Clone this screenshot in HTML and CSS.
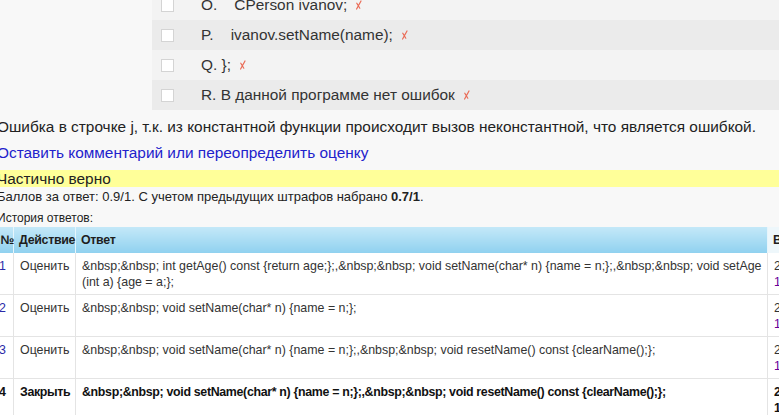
FILE: index.html
```html
<!DOCTYPE html>
<html lang="ru">
<head>
  <meta charset="UTF-8" />
  <title>Просмотр попытки</title>
  <link rel="stylesheet" href="styles.css">
</head>
<body>
  <div class="page">

    <!-- Answer options -->
    <div class="answers">
      <div class="option odd">
        <span class="box"></span>
        <span class="label">O.&nbsp;&nbsp;&nbsp; CPerson ivanov;</span>
        <svg class="cross" width="7" height="10" viewBox="0 0 7 10"><path d="M6 1 L1.6 9 M1.8 3.2 L4.8 8.2" /></svg>
      </div>
      <div class="option even">
        <span class="box"></span>
        <span class="label">P.&nbsp;&nbsp;&nbsp; ivanov.setName(name);</span>
        <svg class="cross" width="7" height="10" viewBox="0 0 7 10"><path d="M6 1 L1.6 9 M1.8 3.2 L4.8 8.2" /></svg>
      </div>
      <div class="option odd">
        <span class="box"></span>
        <span class="label">Q. };</span>
        <svg class="cross" width="7" height="10" viewBox="0 0 7 10"><path d="M6 1 L1.6 9 M1.8 3.2 L4.8 8.2" /></svg>
      </div>
      <div class="option even">
        <span class="box"></span>
        <span class="label">R. В данной программе нет ошибок</span>
        <svg class="cross" width="7" height="10" viewBox="0 0 7 10"><path d="M6 1 L1.6 9 M1.8 3.2 L4.8 8.2" /></svg>
      </div>
    </div>

    <div class="feedback">Ошибка в строчке j, т.к. из константной функции происходит вызов неконстантной, что является ошибкой.</div>
    <div class="comment"><a href="#">Оставить комментарий или переопределить оценку</a></div>
    <div class="correctness">Частично верно</div>
    <div class="grade">Баллов за ответ: 0.9/1. С учетом предыдущих штрафов набрано <b>0.7/1</b>.</div>
    <div class="history-title">История ответов:</div>

    <!-- Responses history -->
    <table class="history">
      <colgroup>
        <col class="c-num"><col class="c-action"><col class="c-answer"><col class="c-time">
      </colgroup>
      <tr>
        <th class="num">№</th>
        <th>Действие</th>
        <th>Ответ</th>
        <th class="time-head">Время</th>
      </tr>
      <tr>
        <td class="num"><a href="#">1</a></td>
        <td>Оценить</td>
        <td class="answer">&amp;nbsp;&amp;nbsp; int getAge() const {return age;};,&amp;nbsp;&amp;nbsp; void setName(char* n) {name = n;};,&amp;nbsp;&amp;nbsp; void setAge<br>(int a) {age = a;};</td>
        <td>22/05/13,<br><a class="visited" href="#">14:32:08</a></td>
      </tr>
      <tr>
        <td class="num"><a href="#">2</a></td>
        <td>Оценить</td>
        <td class="answer">&amp;nbsp;&amp;nbsp; void setName(char* n) {name = n;};</td>
        <td>22/05/13,<br><a class="visited" href="#">14:33:51</a></td>
      </tr>
      <tr>
        <td class="num"><a href="#">3</a></td>
        <td>Оценить</td>
        <td class="answer">&amp;nbsp;&amp;nbsp; void setName(char* n) {name = n;};,&amp;nbsp;&amp;nbsp; void resetName() const {clearName();};</td>
        <td>22/05/13,<br><a class="visited" href="#">14:35:12</a></td>
      </tr>
      <tr class="last">
        <td class="num">4</td>
        <td>Закрыть</td>
        <td class="answer">&amp;nbsp;&amp;nbsp; void setName(char* n) {name = n;};,&amp;nbsp;&amp;nbsp; void resetName() const {clearName();};</td>
        <td>22/05/13,<br>14:35:40</td>
      </tr>
    </table>
  </div>
</body>
</html>
```

FILE: styles.css
```css
html, body {
  overflow: hidden;
}

body {
  margin: 0;
  background: #f8f8f8;
  color: #222;
  font-family: "Liberation Sans", Arial, sans-serif;
}

.page {
  width: 1000px;
  margin: -10px 0 0 -3px;
}

a {
  color: #2222cc;
  text-decoration: none;
}

/* options */
.answers {
  margin-left: 155px;
}

.option {
  display: flex;
  align-items: center;
  height: 30px;
  padding-left: 9px;
  font-size: 15.4px;
  color: #333;
}

.option.odd {
  background: #f3f3f3;
}

.option.even {
  background: #ebebeb;
}

.box {
  width: 11px;
  height: 11px;
  border: 1px solid #d4d4d4;
  background: #fff;
  margin-right: 27px;
}

.label {
  white-space: pre;
}

.cross {
  margin-left: 8px;
}

.cross path {
  fill: none;
  stroke: #ea6a55;
  stroke-width: 1.2;
  stroke-linecap: round;
}

/* feedback */
.feedback,
.comment {
  font-size: 15.4px;
  line-height: 18px;
  margin-top: 8px;
  white-space: nowrap;
}

.correctness {
  margin-top: 8px;
  background: #ffff99;
  font-size: 15.4px;
  line-height: 17px;
}

.grade {
  margin-top: 2px;
  font-size: 13px;
  line-height: 15px;
}

.history-title {
  margin-top: 7px;
  margin-bottom: 1px;
  font-size: 12px;
  line-height: 15px;
}

/* history table */
.history {
  border-collapse: collapse;
  table-layout: fixed;
  width: 900px;
  background: #fff;
  font-size: 12.4px;
  line-height: 16px;
  color: #333;
}

.c-num { width: 16px; }
.c-action { width: 62px; }
.c-answer { width: 692px; }
.c-time { width: 130px; }

.history th {
  height: 26px;
  padding: 0 3px 0 5px;
  text-align: left;
  font-weight: bold;
  letter-spacing: -0.3px;
  white-space: nowrap;
  color: #1e1e1e;
  background: linear-gradient(#c4e8f8, #90d1ef);
  border-right: 1px solid #e6f5fc;
}

.history th.num {
  padding-left: 3px;
  padding-right: 0;
}

.history th.time-head {
  background: #eef7fb;
  border-left: 1px solid #dfe8ee;
}

.history td {
  padding: 5px 6px 4px;
  vertical-align: top;
  border: 1px solid #e4e4e4;
  border-top: none;
}

.history td.answer {
  padding-right: 0;
  white-space: nowrap;
}

.history td.num {
  padding-left: 1px;
  padding-right: 0;
}

.history td.num a {
  color: #2a2aa8;
}

.history a.visited {
  color: #660099;
}

.history tr.last td {
  font-weight: bold;
  letter-spacing: -0.33px;
  color: #111;
}
```
